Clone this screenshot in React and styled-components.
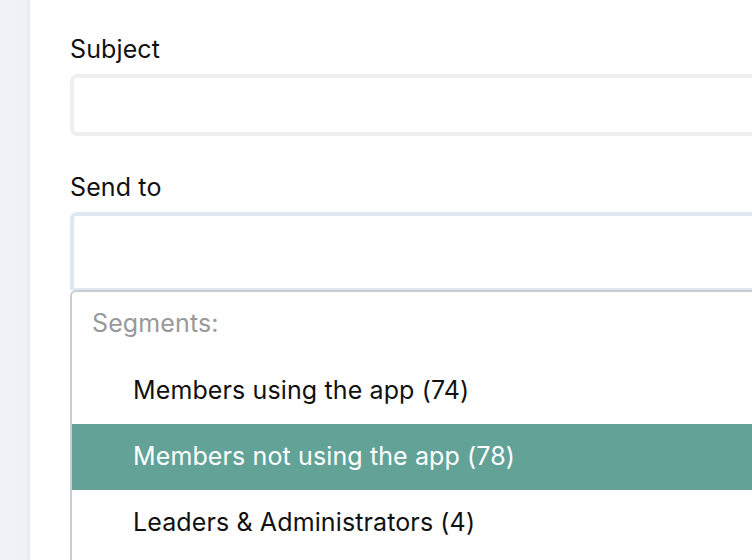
import React from 'react';
import styled, { createGlobalStyle } from 'styled-components';

const GlobalStyle = createGlobalStyle`
    html, body {
        margin: 0;
        padding: 0;
        background: #ffffff;
        font-family: Inter, "Noto Sans", sans-serif;
        letter-spacing: 0.12px;
        overflow: hidden;
    }
`;

/*
    ~~Styles~~
*/
const Page = styled.div`
    display: flex;
    width: 752px;
    height: 560px;
    overflow: hidden;
`;

const Sidebar = styled.div`
    flex: 0 0 30px;
    background: linear-gradient(to right, #eff3f8 0%, #eef2f7 85%, #e6eaf0 100%);
`;

const Main = styled.div`
    flex: 1;
    padding: 33px 0 0 40px;
    display: flex;
    flex-direction: column;
    min-width: 0;
`;

const Label = styled.label`
    font-size: 25px;
    color: #111;
    line-height: 32px;
    margin-bottom: 9px;
`;

const Input = styled.div`
    flex: 0 0 auto;
    height: ${(p) => (p.$focused ? '72px' : '54px')};
    margin-right: -20px;
    border: 4px solid ${(p) => (p.$focused ? '#dfe8f1' : '#eeeeee')};
    border-radius: 7px;
    background: #fff;
    margin-bottom: ${(p) => (p.$focused ? '0' : '35px')};
    ${(p) => p.$focused && 'border-bottom-width: 2px; border-bottom-left-radius: 0; border-bottom-right-radius: 0;'}
`;

const Menu = styled.div`
    margin-right: -20px;
    border: 2px solid #cccccc;
    border-bottom: none;
    border-radius: 6px 6px 0 0;
    flex: 1;
`;

const GroupTitle = styled.div`
    font-size: 25px;
    color: #999999;
    padding: 15px 20px 19px;
    line-height: 32px;
`;

const Option = styled.div`
    height: 66px;
    display: flex;
    align-items: center;
    padding: 0 0 3px 61px;
    box-sizing: border-box;
    font-size: 25px;
    color: ${(p) => (p.$active ? '#ffffff' : '#111111')};
    background: ${(p) => (p.$active ? '#63a397' : 'transparent')};
`;
/* ------------------------------- */

const options = [
    'Members using the app (74)',
    'Members not using the app (78)',
    'Leaders & Administrators (4)',
];

const App = () => {
    return (
        <Page>
            <GlobalStyle />
            <Sidebar />
            <Main>
                <Label>Subject</Label>
                <Input />
                <Label>Send to</Label>
                <Input $focused />
                <Menu>
                    <GroupTitle>Segments:</GroupTitle>
                    {options.map((o, i) => (
                        <Option key={o} $active={i === 1}>{o}</Option>
                    ))}
                </Menu>
            </Main>
        </Page>
    );
};

export default App;
